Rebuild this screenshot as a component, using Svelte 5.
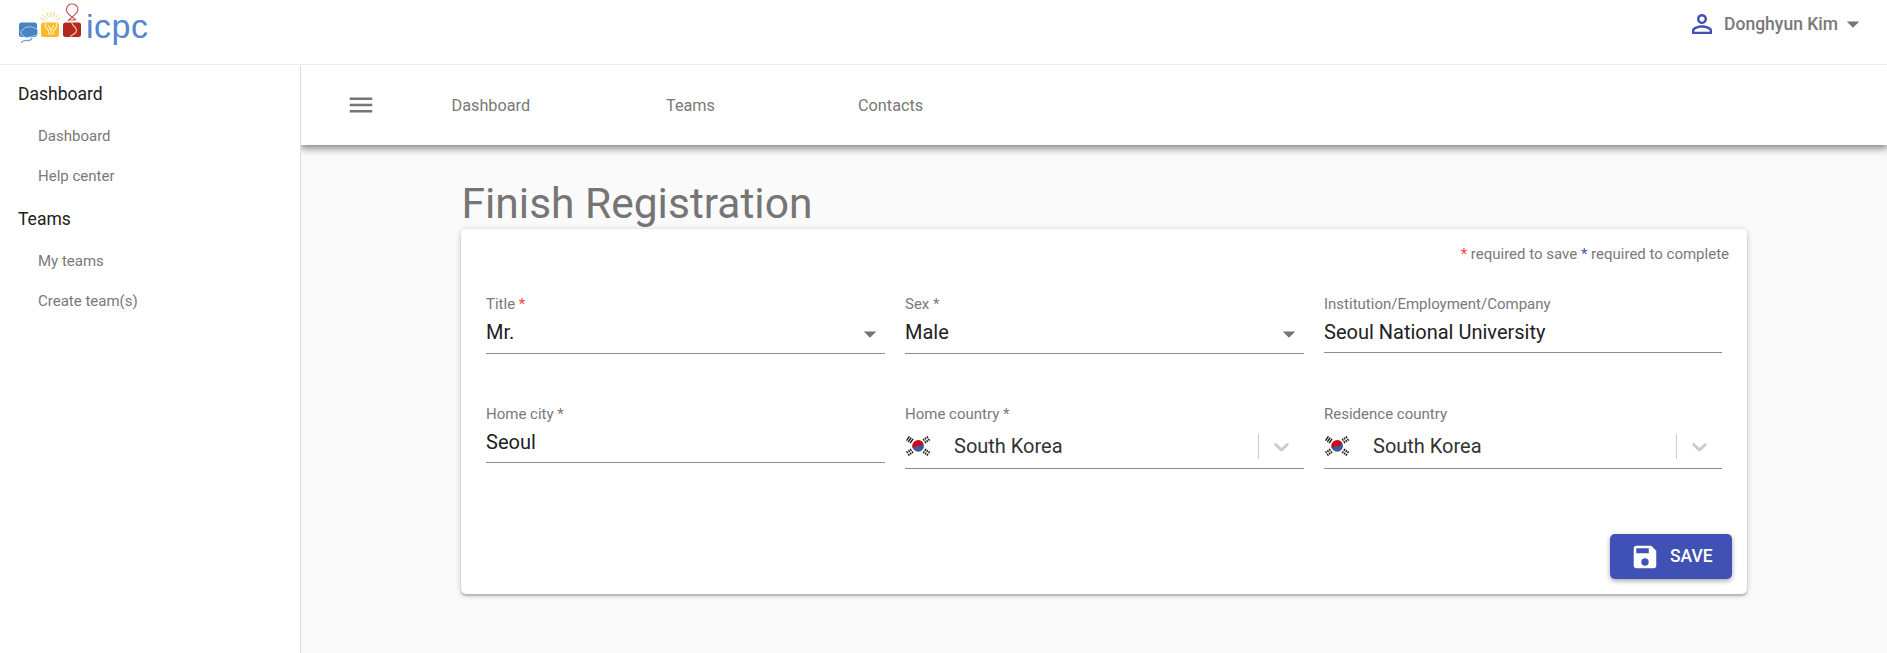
<script>
  const sections = [
    { title: 'Dashboard', items: ['Dashboard', 'Help center'] },
    { title: 'Teams', items: ['My teams', 'Create team(s)'] }
  ];
</script>

{#snippet bars()}
  <path d="M-2.200 -2.600V2.600M0 -2.600V2.600M2.200 -2.600V2.600" />
{/snippet}

{#snippet flag()}
  <svg class="flag" viewBox="0 0 26 20" width="26" height="20">
    <g stroke="#1a1a1a" stroke-width="1.400">
      <g transform="translate(4.800 3.700) rotate(34)">{@render bars()}</g>
      <g transform="translate(21.400 3.700) rotate(-34)" stroke-dasharray="2.200 .8">{@render bars()}</g>
      <g transform="translate(4.800 16.300) rotate(-34)" stroke-dasharray="2.200 .8">{@render bars()}</g>
      <g transform="translate(21.400 16.300) rotate(34)" stroke-dasharray="2.200 .8">{@render bars()}</g>
    </g>
    <circle cx="13.200" cy="10" r="5.800" fill="#3d5a9e" />
    <path d="M8.200 13A5.800 5.800 0 0 1 18.200 7Q16.200 11 13.200 10Q10.200 9 8.200 13z" fill="#cd0a12" />
  </svg>
{/snippet}

{#snippet drop()}
  <svg class="drop" viewBox="0 0 24 24"><path d="M7 10l5 5 5-5z" fill="#757575" /></svg>
{/snippet}

{#snippet country(label, required)}
  <div class="field">
    <span class="label">{label}{required ? ' *' : ''}</span>
    <div class="value country">
      {@render flag()}
      <span class="cname">South Korea</span>
      <i class="sep"></i>
      <svg class="chev" viewBox="0 0 20 20"><path fill="#ccc" d="M4.516 7.548c0.436-0.446 1.043-0.481 1.576 0l3.908 3.747 3.908-3.747c0.533-0.481 1.141-0.446 1.574 0 0.436 0.445 0.408 1.197 0 1.615-0.406 0.418-4.695 4.502-4.695 4.502-0.217 0.223-0.502 0.335-0.787 0.335s-0.57-0.112-0.789-0.335c0 0-4.287-4.084-4.695-4.502s-0.436-1.17 0-1.615z" /></svg>
    </div>
  </div>
{/snippet}

<div class="page">
  <header>
    <div class="brand">
      <svg viewBox="0 0 66 46" width="66" height="46">
        <rect x="1" y="22.500" width="18" height="14.500" rx="2.500" fill="#4684c4" />
        <path d="M4 35q-3-4 2-6q1-3 5-2q3-1 5 1q4 0 3.500 4q1 4-4 3.500q-1 2-4 1.500q-4 2-7.500-2" fill="none" stroke="#a9cbea" stroke-width="1" />
        <path d="M14 38q-1 3-5 2.500t-6 2.500" fill="none" stroke="#6fa3d6" stroke-width="1.300" />
        <rect x="23" y="22.500" width="18" height="14.500" rx="2.500" fill="#fdb92c" />
        <path d="M22.500 18l4 2M24.500 14.500l4 4M28.500 12.500l2 4.500M33 12v5M37 12.500l-2 4.500M40.500 14.500l-3.500 4M42 18l-3 2" fill="none" stroke="#fbd071" stroke-width="1" />
        <path d="M30.500 34v-3.500q-4.500-4-2.500-7.500M35.500 34v-3.500q4.500-4 2.500-7.500M30.500 34h5M30 25l3 5 3-5M33 30v3" fill="none" stroke="#fff0b8" stroke-width="1.200" />
        <rect x="45" y="22.500" width="18" height="14.500" rx="2.500" fill="#b3291c" />
        <path d="M54 17q-6-4-5.500-8q1-5 5.500-5q5 0 6 5q0 4-6 8zM54 17l-4 4M54 17l4 3M51 20h6" fill="none" stroke="#c0564c" stroke-width="1.100" />
        <path d="M54 20q-1 4 2 6q5 5 0 8l-4 2.500" fill="none" stroke="#f3c4be" stroke-width="1.200" />
      </svg>
      <span class="icpc">icpc</span>
    </div>
    <div class="user">
      <svg viewBox="0 0 24 24" width="30" height="30"><path fill="#3f51b5" d="M12 5.900c1.160 0 2.100.94 2.100 2.100s-.94 2.100-2.100 2.100S9.900 9.160 9.900 8s.94-2.100 2.100-2.100m0 9c2.970 0 6.100 1.460 6.100 2.100v1.100H5.900V17c0-.64 3.130-2.100 6.100-2.100M12 4C9.790 4 8 5.790 8 8s1.790 4 4 4 4-1.790 4-4-1.790-4-4-4zm0 9c-2.670 0-8 1.340-8 4v3h16v-3c0-2.660-5.330-4-8-4z" /></svg>
      <span>Donghyun Kim</span>
      {@render drop()}
    </div>
  </header>

  <div class="body">
    <aside>
      {#each sections as s}
        <h2>{s.title}</h2>
        {#each s.items as item}
          <a>{item}</a>
        {/each}
      {/each}
    </aside>

    <main>
      <nav>
        <svg viewBox="0 0 24 24" width="30" height="30"><path fill="#757575" d="M3 18h18v-2H3v2zm0-5h18v-2H3v2zm0-7v2h18V6H3z" /></svg>
        <a class="n1">Dashboard</a>
        <a class="n2">Teams</a>
        <a class="n3">Contacts</a>
      </nav>

      <section class="content">
        <h1>Finish Registration</h1>
        <div class="card">
          <p class="hint"><b class="red">*</b> required to save <b class="blue">*</b> required to complete</p>
          <div class="grid">
            <div class="field">
              <span class="label">Title <b class="red">*</b></span>
              <div class="value select"><span>Mr.</span>{@render drop()}</div>
            </div>
            <div class="field">
              <span class="label">Sex *</span>
              <div class="value select"><span>Male</span>{@render drop()}</div>
            </div>
            <div class="field">
              <span class="label">Institution/Employment/Company</span>
              <div class="value">Seoul National University</div>
            </div>
            <div class="field">
              <span class="label">Home city *</span>
              <div class="value">Seoul</div>
            </div>
            {@render country('Home country', true)}
            {@render country('Residence country', false)}
          </div>
          <button>
            <svg viewBox="0 0 24 24" width="30" height="30"><path fill="#fff" d="M17 3H5c-1.110 0-2 .9-2 2v14c0 1.100.89 2 2 2h14c1.100 0 2-.9 2-2V7l-4-4zm-5 16c-1.660 0-3-1.340-3-3s1.340-3 3-3 3 1.340 3 3-1.340 3-3 3zm3-10H5V5h10v4z" /></svg>
            <span>SAVE</span>
          </button>
        </div>
      </section>
    </main>
  </div>
</div>

<style>
  :global(body) { margin: 0; overflow: hidden; }
  .page {
    height: 653px;
    display: flex;
    flex-direction: column;
    font-family: Roboto, sans-serif;
    color: #797979;
    background: #fff;
  }
  header {
    box-sizing: border-box;
    height: 65px;
    border-bottom: 1px solid #ebebeb;
    display: flex;
    justify-content: space-between;
    align-items: flex-start;
    padding: 0 19px 0 18px;
  }
  .brand { display: flex; }
  .icpc {
    font: 34px/40px "Liberation Sans", sans-serif;
    letter-spacing: .5px;
    color: #5585cf;
    margin: 6px 0 0 2px;
  }
  .user { display: flex; align-items: center; height: 30px; margin-top: 9px; }
  .user span { font-size: 17.5px; font-weight: 500; line-height: 30px; margin-left: 7px; }
  .drop { width: 30px; height: 30px; flex: none; }
  .body { flex: 1; display: flex; padding-top: 1px; }
  aside {
    box-sizing: border-box;
    width: 301px;
    border-right: 1px solid #dcdcdc;
    padding-top: 10px;
  }
  h2 {
    margin: 0;
    padding-left: 18px;
    font-size: 17.5px;
    font-weight: 400;
    line-height: 37px;
    height: 40px;
    color: #212121;
  }
  aside a {
    display: block;
    padding-left: 38px;
    font-size: 15px;
    line-height: 40px;
    height: 40px;
  }
  aside a + h2 { margin-top: 5px; }
  main { flex: 1; display: flex; flex-direction: column; background: #fafafa; }
  nav {
    height: 79px;
    background: #fff;
    display: flex;
    align-items: center;
    box-sizing: border-box;
    padding: 0 0 1px 45px;
    font-size: 16.25px;
    box-shadow: 0 2px 8px 1px rgba(0, 0, 0, .5);
    clip-path: inset(0 0 -20px 0);
  }
  .n1 { margin-left: 75.5px; width: 214.5px; }
  .n2 { width: 192px; }
  .content { padding: 33px 140px 0 160px; }
  h1 { margin: 0; padding-left: .5px; font-size: 42.5px; font-weight: 400; line-height: 51px; color: #757575; }
  .card {
    box-sizing: border-box;
    height: 365px;
    background: #fff;
    border-radius: 5px;
    box-shadow: 0 1px 6px rgba(0, 0, 0, .2), 0 2px 2px rgba(0, 0, 0, .2);
    padding: 14px 15px 15px 25px;
    display: flex;
    flex-direction: column;
  }
  .hint { margin: 0 3px 0 0; text-align: right; font-size: 15px; line-height: 22px; }
  b { font-weight: 400; }
  .red { color: #f44336; }
  .blue { color: #3f51b5; }
  .grid {
    display: grid;
    grid-template-columns: 399px 399px 398px;
    column-gap: 20px;
    row-gap: 0;
    grid-auto-rows: 110px;
    margin: 28px 0 0 0;
  }
  .field { display: flex; flex-direction: column; }
  .label { font-size: 15px; line-height: 22px; height: 22px; }
  .value {
    box-sizing: border-box;
    height: 38px;
    border-bottom: 1px solid #8c8c8c;
    font-size: 20px;
    line-height: 24px;
    padding-top: 5px;
    color: #212121;
  }
  .select { height: 39px; display: flex; justify-content: space-between; align-items: flex-start; }
  .select .drop { margin-top: -1px; }
  .country { height: 44px; padding-top: 9px; display: flex; color: #333; }
  .flag { margin-top: 2px; }
  .cname { margin-left: 23px; flex: 1; }
  .sep { width: 1px; height: 25px; background: #ccc; margin-right: 10px; }
  .chev { width: 25px; height: 25px; margin-right: 10px; }
  button {
    align-self: flex-end;
    margin-top: auto;
    width: 122px;
    height: 45px;
    border: 0;
    border-radius: 5px;
    background: #3f51b5;
    color: #fff;
    display: flex;
    align-items: center;
    padding: 0 0 0 20px;
    font: 500 17.5px/28px Roboto, sans-serif;
    box-shadow: 0 2px 5px rgba(0, 0, 0, .35);
  }
  button span { margin: 0 0 2px 10px; }
</style>
